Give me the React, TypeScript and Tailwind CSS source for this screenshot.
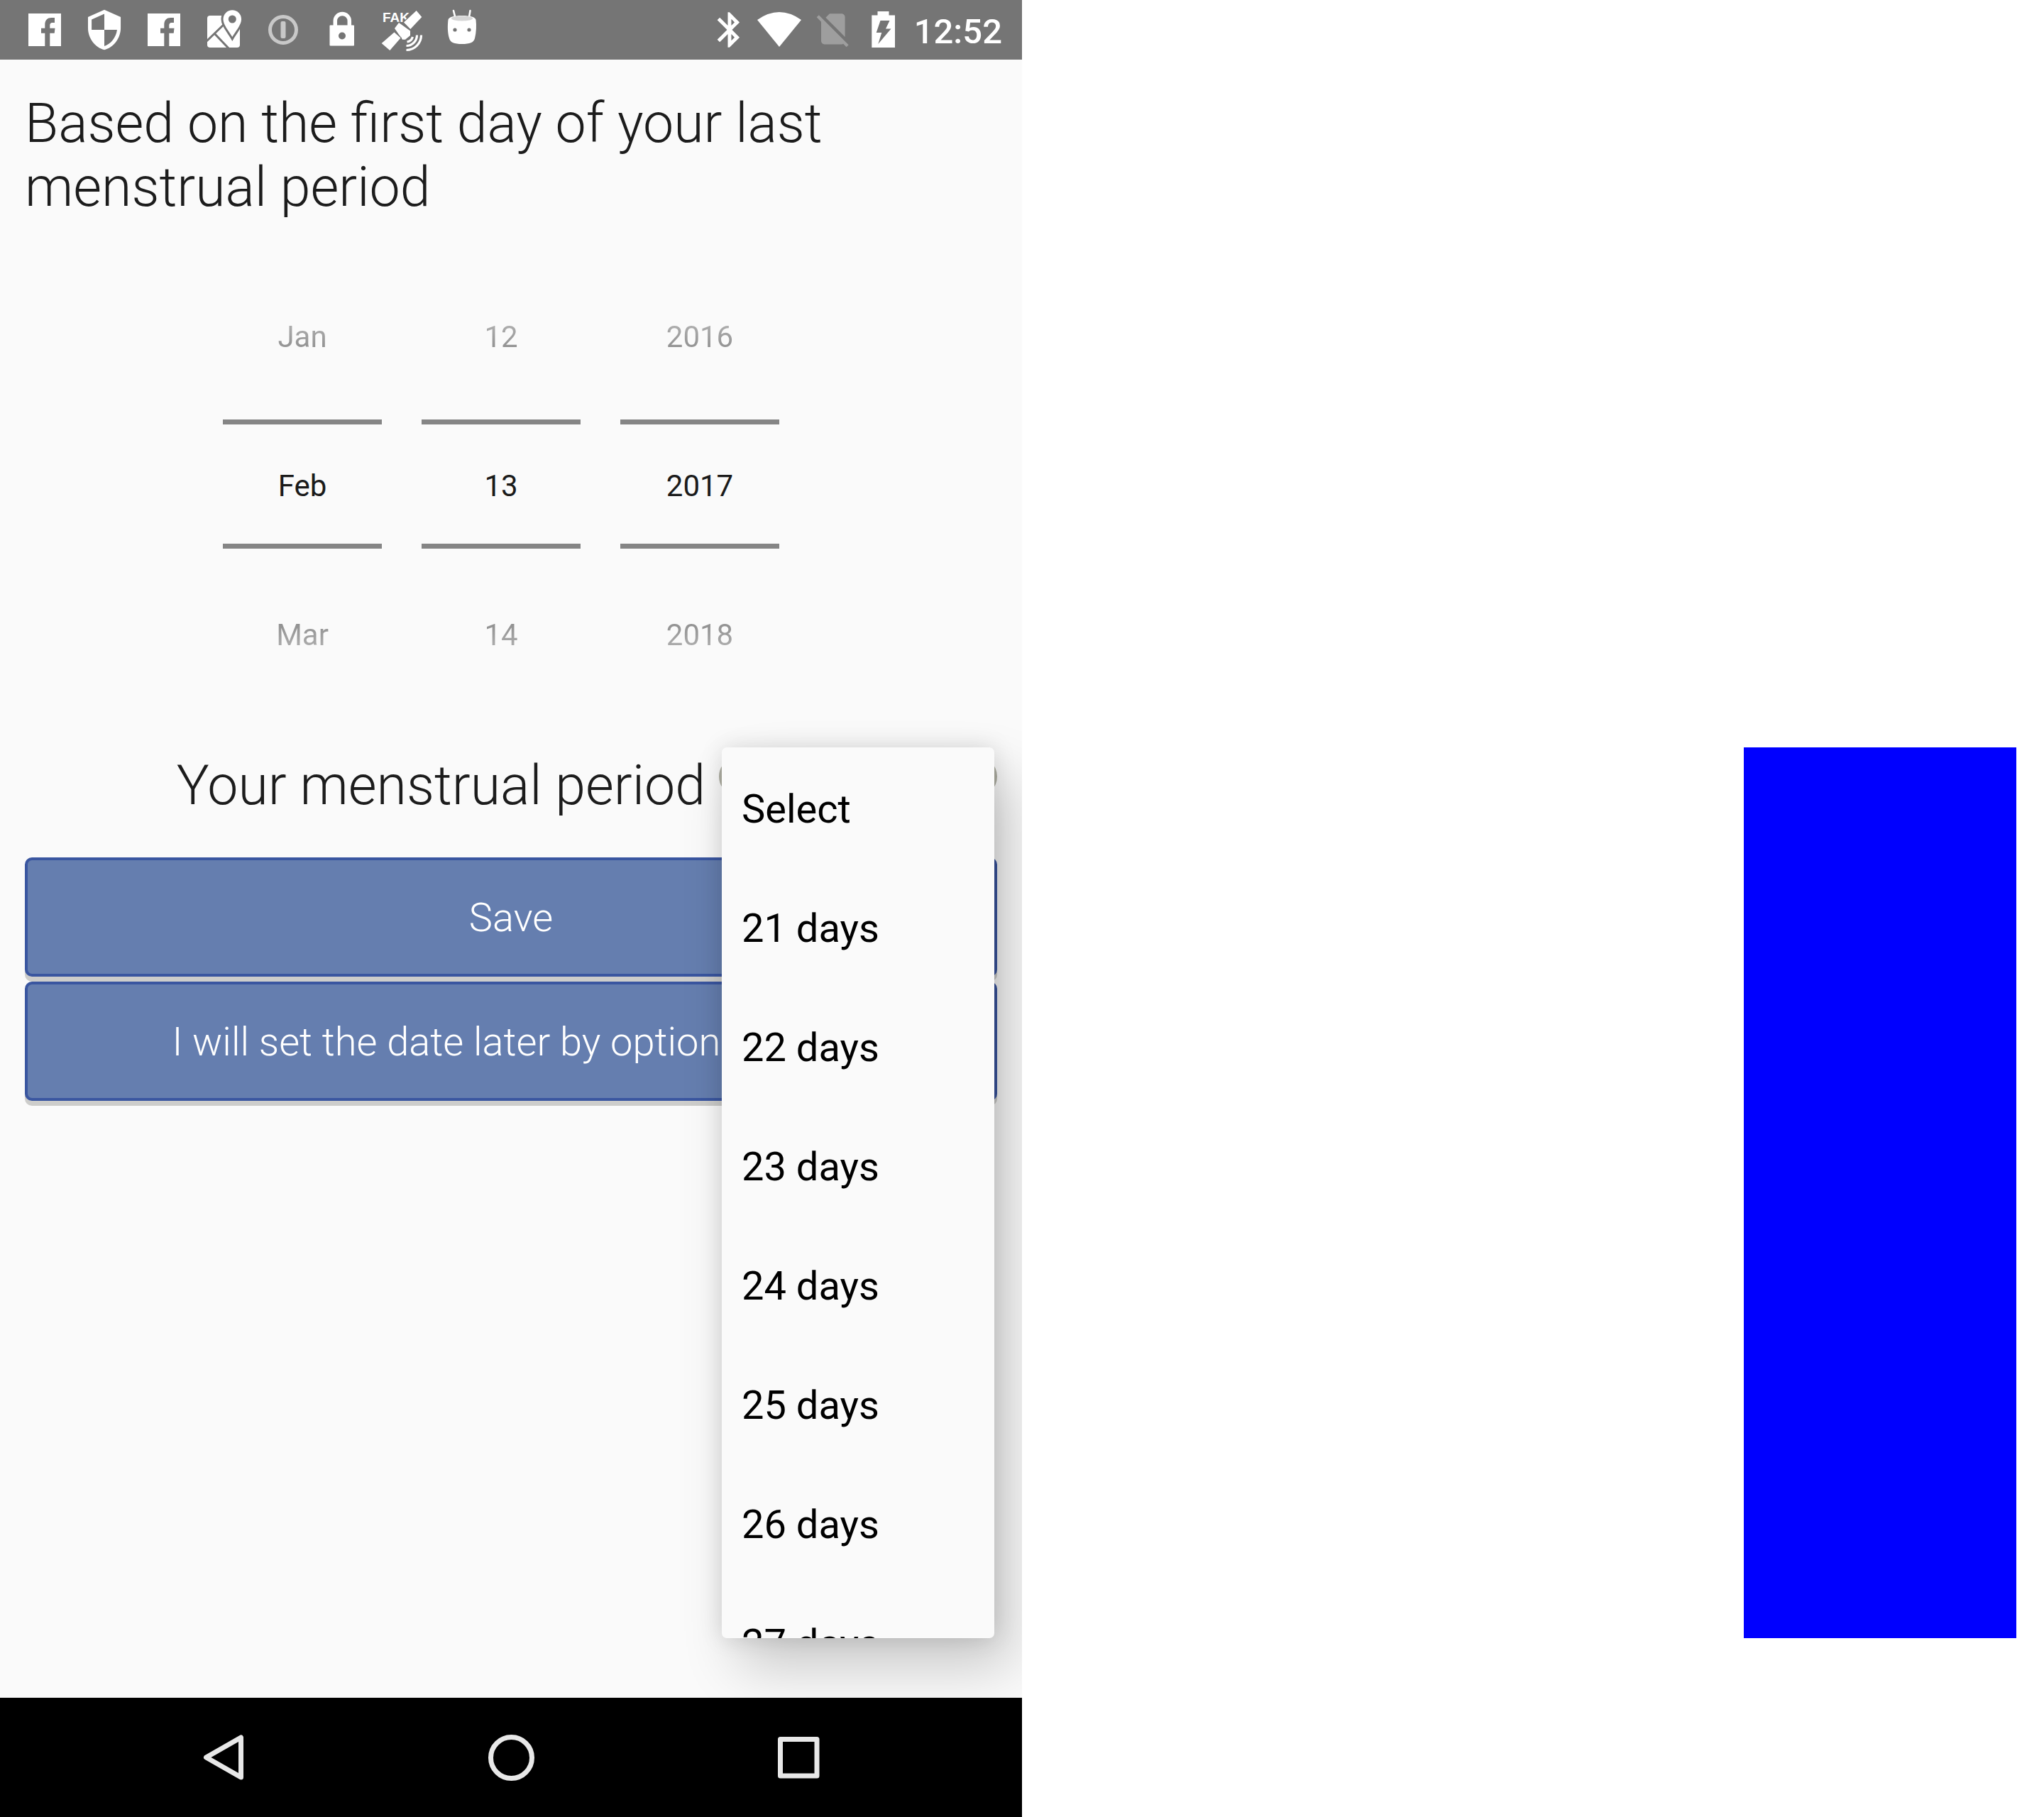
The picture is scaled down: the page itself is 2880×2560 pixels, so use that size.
import React from "react";

const BAR = "#757575";

function Slot({ children }: { children: React.ReactNode }) {
  return (
    <svg className="size-21 shrink-0" viewBox="0 0 84 84" fill="#fff" aria-hidden="true">
      {children}
    </svg>
  );
}

function SystemSlot({ children }: { children: React.ReactNode }) {
  return (
    <svg className="h-21 w-18 shrink-0" viewBox="0 0 72 84" fill="#fff" aria-hidden="true">
      {children}
    </svg>
  );
}

function FacebookIcon() {
  return (
    <Slot>
      <path d="M19 19H65V65H49.3V46.7H55.7L56.5 39.7H49.3V36.5C49.3 33.5 50 32 53 32H56V25H51.5C46 25 42.3 28 42.3 35V39.7H37V46.7H42.3V65H19Z" />
    </Slot>
  );
}

function ShieldIcon() {
  return (
    <Slot>
      <path
        transform="translate(11.3 11.3) scale(2.56)"
        fillRule="evenodd"
        d="M12 1L3 5v6c0 5.55 3.84 10.74 9 12 5.16-1.26 9-6.45 9-12V5l-9-4zm0 10.99h7c-.53 4.12-3.28 7.79-7 8.94V12H5V6.3l7-3.11v8.8z"
      />
    </Slot>
  );
}

function MapPinIcon() {
  return (
    <Slot>
      <rect x="19" y="22" width="46" height="45" rx="4" />
      <path d="M17 59L45 32M29 47L49 68" stroke={BAR} strokeWidth="3" fill="none" />
      <path
        d="M54.3 52C49 43 41.5 35 41.5 27a12.8 12.8 0 0 1 25.6 0C67.1 35 59.600 43 54.300 52Z"
        stroke={BAR}
        strokeWidth="6"
        paintOrder="stroke"
      />
      <circle cx="54.300" cy="27" r="5.500" fill={BAR} />
    </Slot>
  );
}

function KeyRingIcon() {
  return (
    <Slot>
      <circle cx="42" cy="42" r="18.500" fill="none" stroke="#c8c8c8" strokeWidth="5" />
      <rect x="38.500" y="30" width="7" height="24" rx="2" fill="#c8c8c8" />
    </Slot>
  );
}

function LockIcon() {
  return (
    <Slot>
      <path d="M31.300 38V29.500a10 10 0 0 1 20 0V38" fill="none" stroke="#fff" strokeWidth="5.500" />
      <rect x="23.500" y="35.500" width="34.500" height="29" rx="1" />
      <circle cx="41" cy="50.500" r="5" fill={BAR} />
    </Slot>
  );
}

function SatelliteIcon() {
  return (
    <Slot>
      <text x="14" y="31" fontSize="19" fontWeight="700" fontFamily="Liberation Sans, sans-serif">
        FAK
      </text>
      <g stroke={BAR} strokeWidth="2.500" paintOrder="stroke">
        <path d="M61.700 15L69.300 24L53.300 41L44 31.500Z" />
        <path d="M37 32L53 43.500V50L46 55.700H42L31 40Z" />
        <path d="M30.500 45.500L39.500 53.500L24.300 71L12.700 61Z" />
      </g>
      <g fill="none" stroke="#fff" strokeWidth="3.200">
        <path d="M68.500 49.500A21 21 0 0 1 47.500 70.500" />
        <path d="M62.500 49.500A15 15 0 0 1 47.500 64.500" />
        <path d="M56.500 52A10 10 0 0 1 48.500 59" />
      </g>
    </Slot>
  );
}

function RobotIcon() {
  return (
    <Slot>
      <path d="M30 15L33 27M53.500 15L51.500 27" stroke="#fff" strokeWidth="2.600" strokeLinecap="round" />
      <path d="M22.500 28C23 24 31 22 42 22S61 24 61.500 28C62.500 36 62 46 60 54C58.500 60 53 62 42 62S25.500 60 24 54C21.500 46 21.500 36 22.500 28Z" />
      <ellipse cx="42" cy="26" rx="15" ry="3.500" fill="#d6d6d6" />
      <circle cx="32" cy="42" r="2.600" fill={BAR} />
      <circle cx="52" cy="42" r="2.600" fill={BAR} />
    </Slot>
  );
}

function StatusBar() {
  return (
    <header className="flex h-21 items-center justify-between bg-[#757575] pr-7 pl-[21px]">
      <div className="flex">
        <FacebookIcon />
        <ShieldIcon />
        <FacebookIcon />
        <MapPinIcon />
        <KeyRingIcon />
        <LockIcon />
        <SatelliteIcon />
        <RobotIcon />
      </div>
      <div className="flex items-center">
        <SystemSlot>
          <path
            transform="translate(6.300 12.400) scale(2.470)"
            d="M17.71 7.71L12 2h-1v7.59L6.41 5 5 6.41 10.59 12 5 17.59 6.41 19 11 14.41V22h1l5.71-5.71-4.3-4.29 4.3-4.29zM13 5.83l1.88 1.88L13 9.59V5.83zm1.88 10.46L13 18.17v-3.76l1.88 1.88z"
          />
        </SystemSlot>
        <SystemSlot>
          <path d="M3 28Q34 6 65 28L34 66Z" />
        </SystemSlot>
        <SystemSlot>
          <path
            transform="translate(9 12) scale(2.400)"
            fill="#9e9e9e"
            d="M18.99 5c0-1.1-.89-2-1.99-2h-7L7.66 5.34 19 16.68 18.99 5zM3.65 3.88L2.38 5.15 5 7.77V19c0 1.1.9 2 2 2h10.01c.35 0 .67-.1.96-.26l1.88 1.88 1.27-1.27L3.65 3.88z"
          />
        </SystemSlot>
        <SystemSlot>
          <path d="M20.300 21.500H28.500V16H44.500V21.500H53V67H20.300Z" />
          <path d="M32.500 29H45.500L40 40.500H47.500L29.300 62L34.300 46H26.700Z" fill={BAR} />
        </SystemSlot>
        <time className="pt-1 pl-2 text-[49px] leading-none font-medium text-white">12:52</time>
      </div>
    </header>
  );
}

const COLUMNS = [
  { label: "Month", values: ["Jan", "Feb", "Mar"] },
  { label: "Day", values: ["12", "13", "14"] },
  { label: "Year", values: ["2016", "2017", "2018"] },
];

function DatePicker() {
  return (
    <div className="flex justify-center gap-14 pr-7 text-[42px] leading-12">
      {COLUMNS.map(({ label, values: [prev, current, next] }) => (
        <div key={label} role="group" aria-label={label} className="flex w-56 flex-col text-center">
          <button type="button" className="flex h-[238px] items-center justify-center pt-1.5">
            <span className="bg-linear-to-b from-[#b4b4b4] to-[#8a8a8a] bg-clip-text text-transparent">{prev}</span>
          </button>
          <div className="flex h-[182px] items-center justify-center border-y-[7px] border-[#858585] pt-1.5 text-[#1a1a1a]">
            {current}
          </div>
          <button type="button" className="flex h-[238px] items-center justify-center pt-1.5">
            <span className="bg-linear-to-b from-[#8a8a8a] to-[#b4b4b4] bg-clip-text text-transparent">{next}</span>
          </button>
        </div>
      ))}
    </div>
  );
}

const OPTIONS = ["Select", "21 days", "22 days", "23 days", "24 days", "25 days", "26 days", "27 days"];

function PeriodMenu() {
  return (
    <ul
      role="listbox"
      aria-label="Period length"
      className="absolute top-[42px] right-1 z-10 h-[1255px] w-96 overflow-hidden rounded-[7px] bg-[#fafafa] shadow-[24px_40px_80px_rgba(0,0,0,0.2),0_0_32px_rgba(0,0,0,0.13)]"
    >
      {OPTIONS.map((option, i) => (
        <li key={option} role="option" aria-selected={i === 0}>
          <button
            type="button"
            className="flex h-42 w-full items-center px-7 pt-1.5 text-left text-[56px] leading-none text-black"
          >
            {option}
          </button>
        </li>
      ))}
    </ul>
  );
}

function ActionButton({ children }: { children: React.ReactNode }) {
  return (
    <button
      type="button"
      className="h-42 w-full rounded-[10px] border-4 border-[#3a56a0] bg-[#657eaf] pt-0.5 text-[56px] leading-none font-light whitespace-nowrap text-white shadow-[0_7px_0_#cdcdcb]"
    >
      {children}
    </button>
  );
}

function NavButton({ label, children }: { label: string; children: React.ReactNode }) {
  return (
    <button type="button" aria-label={label} className="flex flex-1 items-center justify-center">
      <svg className="size-21" viewBox="0 0 84 84" fill="none" stroke="#e8e8e8" strokeWidth="7" strokeLinejoin="round">
        {children}
      </svg>
    </button>
  );
}

function Phone() {
  return (
    <div className="relative flex w-1/2 flex-col overflow-hidden bg-[#fafafa] font-[Roboto,sans-serif]">
      <StatusBar />
      <main className="flex-1 px-[35px] pt-[45px]">
        <h1 className="mb-11 text-[77px] leading-[90px] font-light text-[#1c1c1c]">
          Based on the first day of your last menstrual period
        </h1>
        <DatePicker />
        <div className="relative flex items-start justify-end gap-[19px] pt-[51px] pb-14">
          <label htmlFor="period" className="text-[77px] leading-[90px] font-light text-[#1c1c1c]">
            Your menstrual period
          </label>
          <select
            id="period"
            className="mt-1 h-14 w-[392px] appearance-none rounded-[28px] border-4 border-[#b0b0a4] bg-[#bebeb6] px-7"
          >
            <option></option>
          </select>
          <PeriodMenu />
        </div>
        <div className="flex flex-col gap-[7px]">
          <ActionButton>Save</ActionButton>
          <ActionButton>I will set the date later by options menu</ActionButton>
        </div>
      </main>
      <nav className="z-20 flex h-42 bg-black px-28">
        <NavButton label="Back">
          <path d="M66.500 14V70L17.500 42Z" />
        </NavButton>
        <NavButton label="Home">
          <circle cx="42.500" cy="42.500" r="29" />
        </NavButton>
        <NavButton label="Recent apps">
          <rect x="16.500" y="16.500" width="51.500" height="51.500" />
        </NavButton>
      </nav>
    </div>
  );
}

export default function App() {
  return (
    <div className="flex min-h-screen bg-white">
      <Phone />
      <div className="flex w-1/2 justify-end pt-[1053px] pr-[39px]">
        <div className="h-[1255px] w-96 bg-[#0000ff]" />
      </div>
    </div>
  );
}
